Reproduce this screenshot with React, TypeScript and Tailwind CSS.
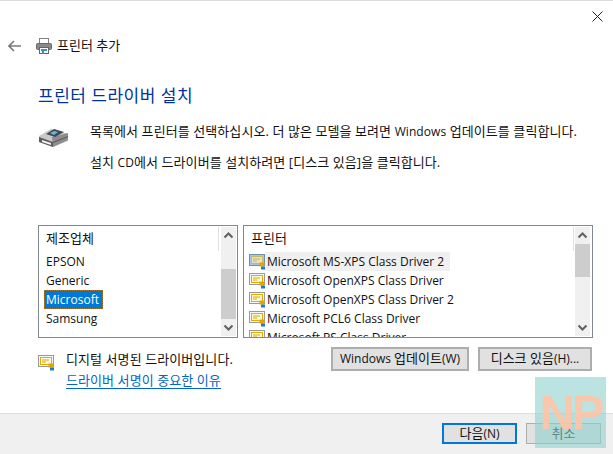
import React from "react";

const font = { fontFamily: '"Open Sans","Noto Sans CJK KR",sans-serif' };

function Cert({ blue = false }: { blue?: boolean }) {
  return (
    <svg width="17" height="16" viewBox="0 0 17 16" className="shrink-0">
      {blue && <rect x="0" y="0" width="16" height="12" fill="#7f9cbc" />}
      <rect x="0.5" y="0.5" width="15" height="11" fill={blue ? "#a8c6e4" : "#f7f7f7"} stroke={blue ? "#6f8fb0" : "#9a9a9a"} />
      <rect x="2.5" y="2.5" width="11" height="7" fill={blue ? "#e6e2bc" : "#fff8dc"} stroke={blue ? "#c9b869" : "#e3ac00"} />
      <path d="M4 5h7M4 7h4" stroke={blue ? "#c2b46c" : "#dca800"} />
      <rect x="10.5" y="8.5" width="5" height="4" fill="#e2a400" />
      <rect x="12" y="12.5" width="4" height="3" fill="#1f78d1" />
    </svg>
  );
}

function ScrollBar({ thumbTop, thumbH, cls }: { thumbTop: number; thumbH: number; cls: string }) {
  return (
    <div className={`absolute top-[1px] bottom-[1px] w-[15px] bg-[#f0f0f0] flex flex-col ${cls}`}>
      <svg width="15" height="17" viewBox="0 0 15 17" className="shrink-0">
        <path d="M3.5 10.5l4-4 4 4" fill="none" stroke="#606060" strokeWidth="2" />
      </svg>
      <div className="flex-1 relative">
        <div className="absolute left-0 right-0 bg-[#cdcdcd]" style={{ top: thumbTop, height: thumbH }} />
      </div>
      <svg width="15" height="17" viewBox="0 0 15 17" className="shrink-0">
        <path d="M3.5 6.5l4 4 4-4" fill="none" stroke="#606060" strokeWidth="2" />
      </svg>
    </div>
  );
}

const Btn = ({ cls, children }: { cls: string; children: React.ReactNode }) => (
  <div className={`bg-[#e1e1e1] flex items-center justify-center text-[#111] ${cls}`}>{children}</div>
);

export default function App() {
  const printers = ["Microsoft MS-XPS Class Driver 2", "Microsoft OpenXPS Class Driver", "Microsoft OpenXPS Class Driver 2", "Microsoft PCL6 Class Driver", "Microsoft PS Class Driver"];
  return (
    <div style={font} className="relative w-[613px] h-[454px] bg-white flex flex-col overflow-hidden text-[13px] text-[#111]">
      <div className="h-px bg-[#dcdcdc]" />
      <div className="h-[24px] flex justify-end items-center pr-[10px] pt-[6px]">
        <svg width="11" height="11" viewBox="0 0 11 11"><path d="M0.5 0.5l10 10M10.5 0.5l-10 10" stroke="#222" /></svg>
      </div>
      <div className="h-[41px] flex items-center pl-[8px] pt-[1px]">
        <svg width="13" height="12" viewBox="0 0 13 12"><path d="M6 1L1 6l5 5M1 6h12" fill="none" stroke="#7a7a7a" strokeWidth="1.6" /></svg>
        <svg width="16" height="16" viewBox="0 0 16 16" className="ml-[15px]">
          <rect x="3.5" y="0.5" width="9" height="6" fill="#fff" stroke="#808080" />
          <rect x="0.5" y="5.5" width="15" height="6" rx="1" fill="#8a8a8a" stroke="#6a6a6a" />
          <rect x="3.5" y="9.5" width="9" height="6" fill="#fff" stroke="#5a6a6a" />
          <path d="M5 11h6v2H8v3H6v-3H5z" fill="#3f8fc4" />
        </svg>
        <span className="ml-[5px]">프린터 추가</span>
      </div>
      <div className="pl-[38px] mt-[20px] text-[17px] leading-[20px] text-[#003399] tracking-[0.5px]">프린터 드라이버 설치</div>
      <div className="flex pl-[39px] mt-[16px]">
        <svg width="30" height="20" viewBox="0 0 30 20" className="mt-[6px] shrink-0">
          <path d="M0 8L12 1l17 5v7L14 19 0 14z" fill="#c9c9c9" />
          <path d="M13 9l16-4v7l-15 7z" fill="#8d8d8d" />
          <path d="M7 6l8-5 10 3-9 5z" fill="#3f4a52" />
          <path d="M11 5l4-2 4 1-4 3z" fill="#6db4dc" />
          <path d="M0 9l14 5v5L0 14z" fill="#5c5c5c" />
          <path d="M3 12l9 3v2l-9-3z" fill="#f4f4f4" />
          <path d="M14 14l15-6v1L14 15z" fill="#555" />
        </svg>
        <div className="ml-[21px] flex flex-col gap-[12px] leading-[18px] tracking-[0.08px]">
          <div>목록에서 프린터를 선택하십시오. 더 많은 모델을 보려면 <span className="text-[12px]">Windows</span> 업데이트를 클릭합니다.</div>
          <div>설치 <span className="text-[12px]">CD</span>에서 드라이버를 설치하려면 [디스크 있음]을 클릭합니다.</div>
        </div>
      </div>
      <div className="flex pl-[38px] mt-[53px] gap-[5px]">
        <div className="relative w-[200px] h-[113px] border border-[#828790]">
          <div className="h-[21px] pl-[7px] pt-[3px] leading-[18px]">제조업체</div>
          <div className="mt-[5px] flex flex-col text-[12px] leading-[19px]">
            <div className="pl-[7px] h-[19px]">EPSON</div>
            <div className="pl-[7px] h-[19px]">Generic</div>
            <div className="ml-[5px] pl-[2px] w-[59px] h-[19px] bg-[#0078d7] text-white outline-1 outline-dotted outline-[#a8762c] -outline-offset-1">Microsoft</div>
            <div className="pl-[7px] h-[19px]">Samsung</div>
          </div>
          <div className="absolute left-[179px] top-[1px] w-px h-[24px] bg-[#e0e0e0]" />
          <ScrollBar cls="right-[1px]" thumbTop={25} thumbH={50} />
        </div>
        <div className="relative w-[350px] h-[113px] border border-[#828790] overflow-hidden">
          <div className="h-[21px] pl-[7px] pt-[3px] leading-[18px]">프린터</div>
          <div className="mt-[5px] flex flex-col text-[12px]">
            {printers.map((p, i) => (
              <div key={p} className="flex items-center h-[19px] pl-[5px]">
                <Cert blue={i === 0} />
                <span className={`ml-[-1px] pl-[2px] pr-[6px] leading-[19px] ${i === 0 ? "bg-[#f0f0f0]" : ""}`}>{p}</span>
              </div>
            ))}
          </div>
          <div className="absolute left-[329px] top-[1px] w-px h-[24px] bg-[#e0e0e0]" />
          <ScrollBar cls="right-[2px]" thumbTop={0} thumbH={33} />
        </div>
      </div>
      <div className="flex-1 flex pl-[38px] pt-[9px]">
        <div className="mt-[8px]"><Cert /></div>
        <div className="ml-[11px] flex flex-col mt-[4px] tracking-[0.08px]">
          <div className="leading-[17px]">디지털 서명된 드라이버입니다.</div>
          <div className="mt-[4px] leading-[16px] text-[#0066cc] border-b border-[#0066cc] w-fit">드라이버 서명이 중요한 이유</div>
        </div>
        <div className="ml-auto mr-[21px] flex gap-[9px] h-[24px]">
          <Btn cls="w-[138px] border-2 border-[#adadad]"><span className="text-[12px]">Windows&nbsp;</span>업데이트<span className="text-[12px]">(W)</span></Btn>
          <Btn cls="w-[114px] border-2 border-[#adadad]">디스크 있음<span className="text-[12px]">(H)...</span></Btn>
        </div>
      </div>
      <div className="h-[41px] shrink-0 bg-[#f0f0f0] border-t border-[#dfdfdf] flex justify-end items-start pt-[9px] pr-[12px] gap-[9px]">
        <Btn cls="w-[75px] h-[21px] border-2 border-[#0078d7]">다음<span className="text-[12px]">(N)</span></Btn>
        <Btn cls="w-[75px] h-[21px] border border-[#adadad]">취소</Btn>
      </div>
      <div className="absolute left-[535px] top-[377px] w-[71px] h-[71px] bg-[#8ed0cd]/60 flex items-center justify-center overflow-hidden">
        <span className="text-[49px] leading-none tracking-[-3px] text-[#ffc4a6]/90 font-bold" style={{ fontFamily: '"Liberation Sans",sans-serif' }}>NP</span>
      </div>
    </div>
  );
}
